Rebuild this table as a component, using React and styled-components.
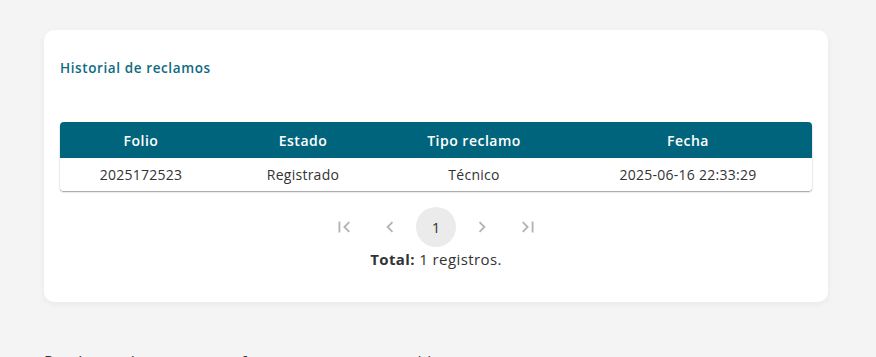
import React from "react";
import styled, { createGlobalStyle } from "styled-components";

const Global = createGlobalStyle`
  html, body { margin: 0; padding: 0; background: #f4f4f4; }
  body { font-family: "Open Sans", "Noto Sans", Arial, sans-serif; color: #333; }
  * { box-sizing: border-box; }
`;

const Page = styled.div`
  padding: 30px 48px 0 44px;
  width: 876px;
  height: 357px;
  overflow: hidden;
`;

const Card = styled.section`
  width: 784px;
  height: 272px;
  background: #fff;
  border-radius: 10px;
  box-shadow: 0 2px 6px rgba(0, 0, 0, 0.05);
  padding: 28px 16px 0;
  display: flex;
  flex-direction: column;
`;

const Title = styled.h2`
  margin: 0;
  font-size: 13.5px;
  font-weight: 600;
  letter-spacing: 0.6px;
  line-height: 20px;
  color: #0f6b7f;
`;

const Table = styled.div`
  margin-top: 44px;
  border-radius: 4px;
  box-shadow: 0 1px 1.5px rgba(0, 0, 0, 0.4);
  overflow: hidden;
`;

const Row = styled.div`
  display: grid;
  grid-template-columns: 162px 162px 180px 1fr;
  align-items: center;
  height: ${(p) => (p.$head ? "36px" : "33px")};
  background: ${(p) => (p.$head ? "#00657c" : "#fff")};
  color: ${(p) => (p.$head ? "#fff" : "#333")};
  font-weight: ${(p) => (p.$head ? 600 : 400)};
  letter-spacing: ${(p) => (p.$head ? "0.5px" : "0.25px")};
  font-size: 14px;
`;

const Cell = styled.div`
  text-align: center;
`;

const Pager = styled.nav`
  margin-top: 16px;
  display: flex;
  justify-content: center;
  gap: 6px;
`;

const PageBtn = styled.button`
  width: 40px;
  height: 40px;
  border: none;
  border-radius: 50%;
  background: ${(p) => (p.$active ? "#ebebeb" : "transparent")};
  color: ${(p) => (p.$active ? "#333" : "rgba(0,0,0,0.3)")};
  font-family: inherit;
  font-size: 15px;
  display: flex;
  align-items: center;
  justify-content: center;
  padding: 0;
`;

const Total = styled.p`
  margin: 2px 0 0;
  text-align: center;
  font-size: 15px;
  letter-spacing: 0.4px;
  line-height: 20px;
  color: #333;
  b { font-weight: 700; }
`;

const Footer = styled.p`
  margin: 49px 0 0;
  font-size: 16px;
  line-height: 22px;
  color: #333;
  span { color: #f28c1c; font-weight: 700; }
`;

const Icon = ({ d }) => (
  <svg width="22" height="22" viewBox="0 0 24 24" fill="currentColor">
    <path d={d} />
  </svg>
);

const rows = [["2025172523", "Registrado", "Técnico", "2025-06-16 22:33:29"]];

export default function App() {
  return (
    <Page>
      <Global />
      <Card>
        <Title>Historial de reclamos</Title>
        <Table>
          <Row $head>
            <Cell>Folio</Cell>
            <Cell>Estado</Cell>
            <Cell>Tipo reclamo</Cell>
            <Cell>Fecha</Cell>
          </Row>
          {rows.map((r) => (
            <Row key={r[0]}>
              {r.map((c) => (
                <Cell key={c}>{c}</Cell>
              ))}
            </Row>
          ))}
        </Table>
        <Pager>
          <PageBtn aria-label="primera">
            <Icon d="M18.41 16.59L13.82 12l4.59-4.59L17 6l-6 6 6 6zM6 6h2v12H6z" />
          </PageBtn>
          <PageBtn aria-label="anterior">
            <Icon d="M15.41 7.41L14 6l-6 6 6 6 1.41-1.41L10.83 12z" />
          </PageBtn>
          <PageBtn $active>1</PageBtn>
          <PageBtn aria-label="siguiente">
            <Icon d="M10 6L8.59 7.41 13.17 12l-4.58 4.59L10 18l6-6z" />
          </PageBtn>
          <PageBtn aria-label="última">
            <Icon d="M5.59 7.41L10.18 12l-4.59 4.59L7 18l6-6-6-6zM16 6h2v12h-2z" />
          </PageBtn>
        </Pager>
        <Total>
          <b>Total:</b> 1 registros.
        </Total>
      </Card>
      <Footer>
        Puedes ver las <span>preguntas</span> frecuentes en nuestro sitio.
      </Footer>
    </Page>
  );
}
